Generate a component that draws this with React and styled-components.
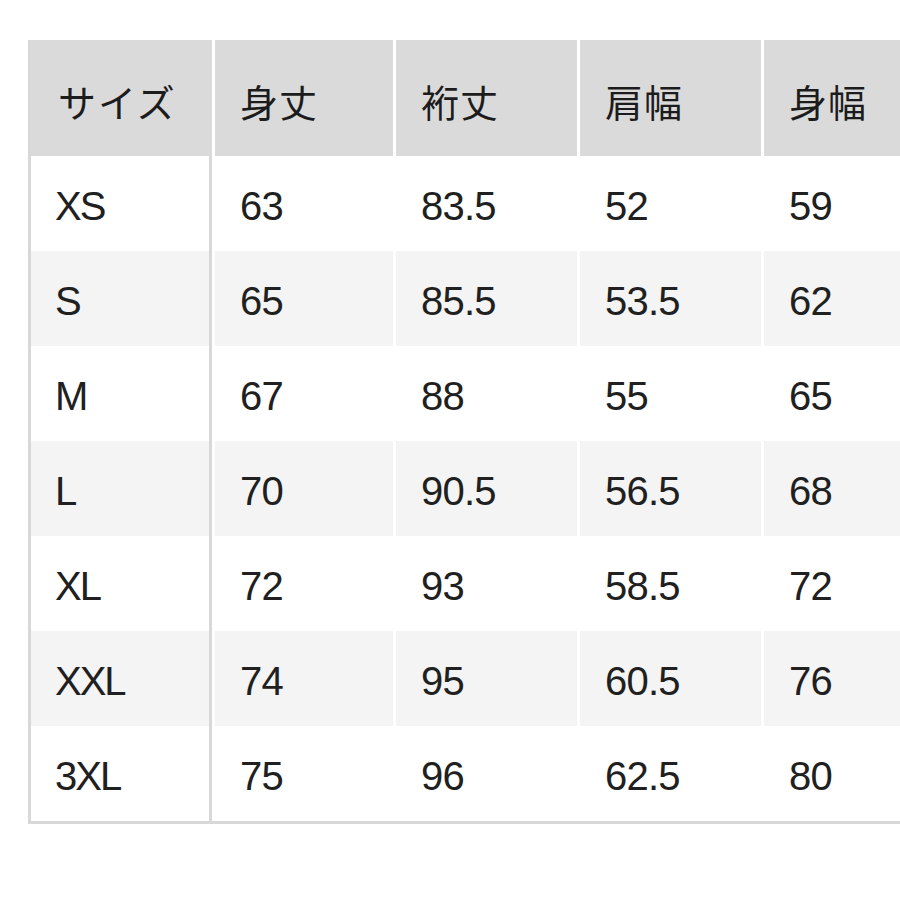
import React from 'react';
import styled, { createGlobalStyle } from 'styled-components';

const GlobalStyle = createGlobalStyle`
  html, body {
    margin: 0;
    padding: 0;
    background: #ffffff;
    overflow: hidden;
  }
  body {
    font-family: "Liberation Sans", "Noto Sans CJK JP", sans-serif;
    color: #1a1a1a;
  }
`;

const Page = styled.div`
  width: 900px;
  height: 900px;
  padding: 40px 0 0 28px;
  box-sizing: border-box;
  overflow: hidden;
`;

const Table = styled.div`
  display: grid;
  grid-template-columns: 181px 178px 181px 181px 200px;
  grid-template-rows: 116px repeat(7, 95px);
  column-gap: 3px;
  width: max-content;
  background: #ffffff;
  border-left: 3px solid #d8d8d8;
  border-bottom: 3px solid #d8d8d8;
`;

const HeadCell = styled.div`
  display: flex;
  align-items: center;
  padding: 4px 0 0 25px;
  box-sizing: border-box;
  background: #dadada;
  font-family: "Noto Sans CJK JP", sans-serif;
  font-size: 38px;
  letter-spacing: 1px;
  color: #1c1c1c;
  ${({ $first }) => $first && `
    padding-left: 27px;
    letter-spacing: 2px;
  `}
`;

const Cell = styled.div`
  display: flex;
  align-items: center;
  padding: 5px 0 0 25px;
  box-sizing: border-box;
  background: ${({ $striped }) => ($striped ? '#f4f4f4' : '#ffffff')};
  font-size: 40px;
  letter-spacing: -0.8px;
  color: #202020;
  ${({ $first }) => $first && `
    border-right: 3px solid #d8d8d8;
    padding-left: 24px;
    letter-spacing: -2px;
  `}
`;

const headers = ['サイズ', '身丈', '裄丈', '肩幅', '身幅'];

const rows = [
  ['XS', '63', '83.5', '52', '59'],
  ['S', '65', '85.5', '53.5', '62'],
  ['M', '67', '88', '55', '65'],
  ['L', '70', '90.5', '56.5', '68'],
  ['XL', '72', '93', '58.5', '72'],
  ['XXL', '74', '95', '60.5', '76'],
  ['3XL', '75', '96', '62.5', '80'],
];

const App = () => (
  <Page>
    <GlobalStyle />
    <Table>
      {headers.map((h, i) => (
        <HeadCell key={h} $first={i === 0}>{h}</HeadCell>
      ))}
      {rows.map((row, r) =>
        row.map((value, c) => (
          <Cell key={`${r}-${c}`} $first={c === 0} $striped={r % 2 === 1}>
            {value}
          </Cell>
        ))
      )}
    </Table>
  </Page>
);

export default App;
